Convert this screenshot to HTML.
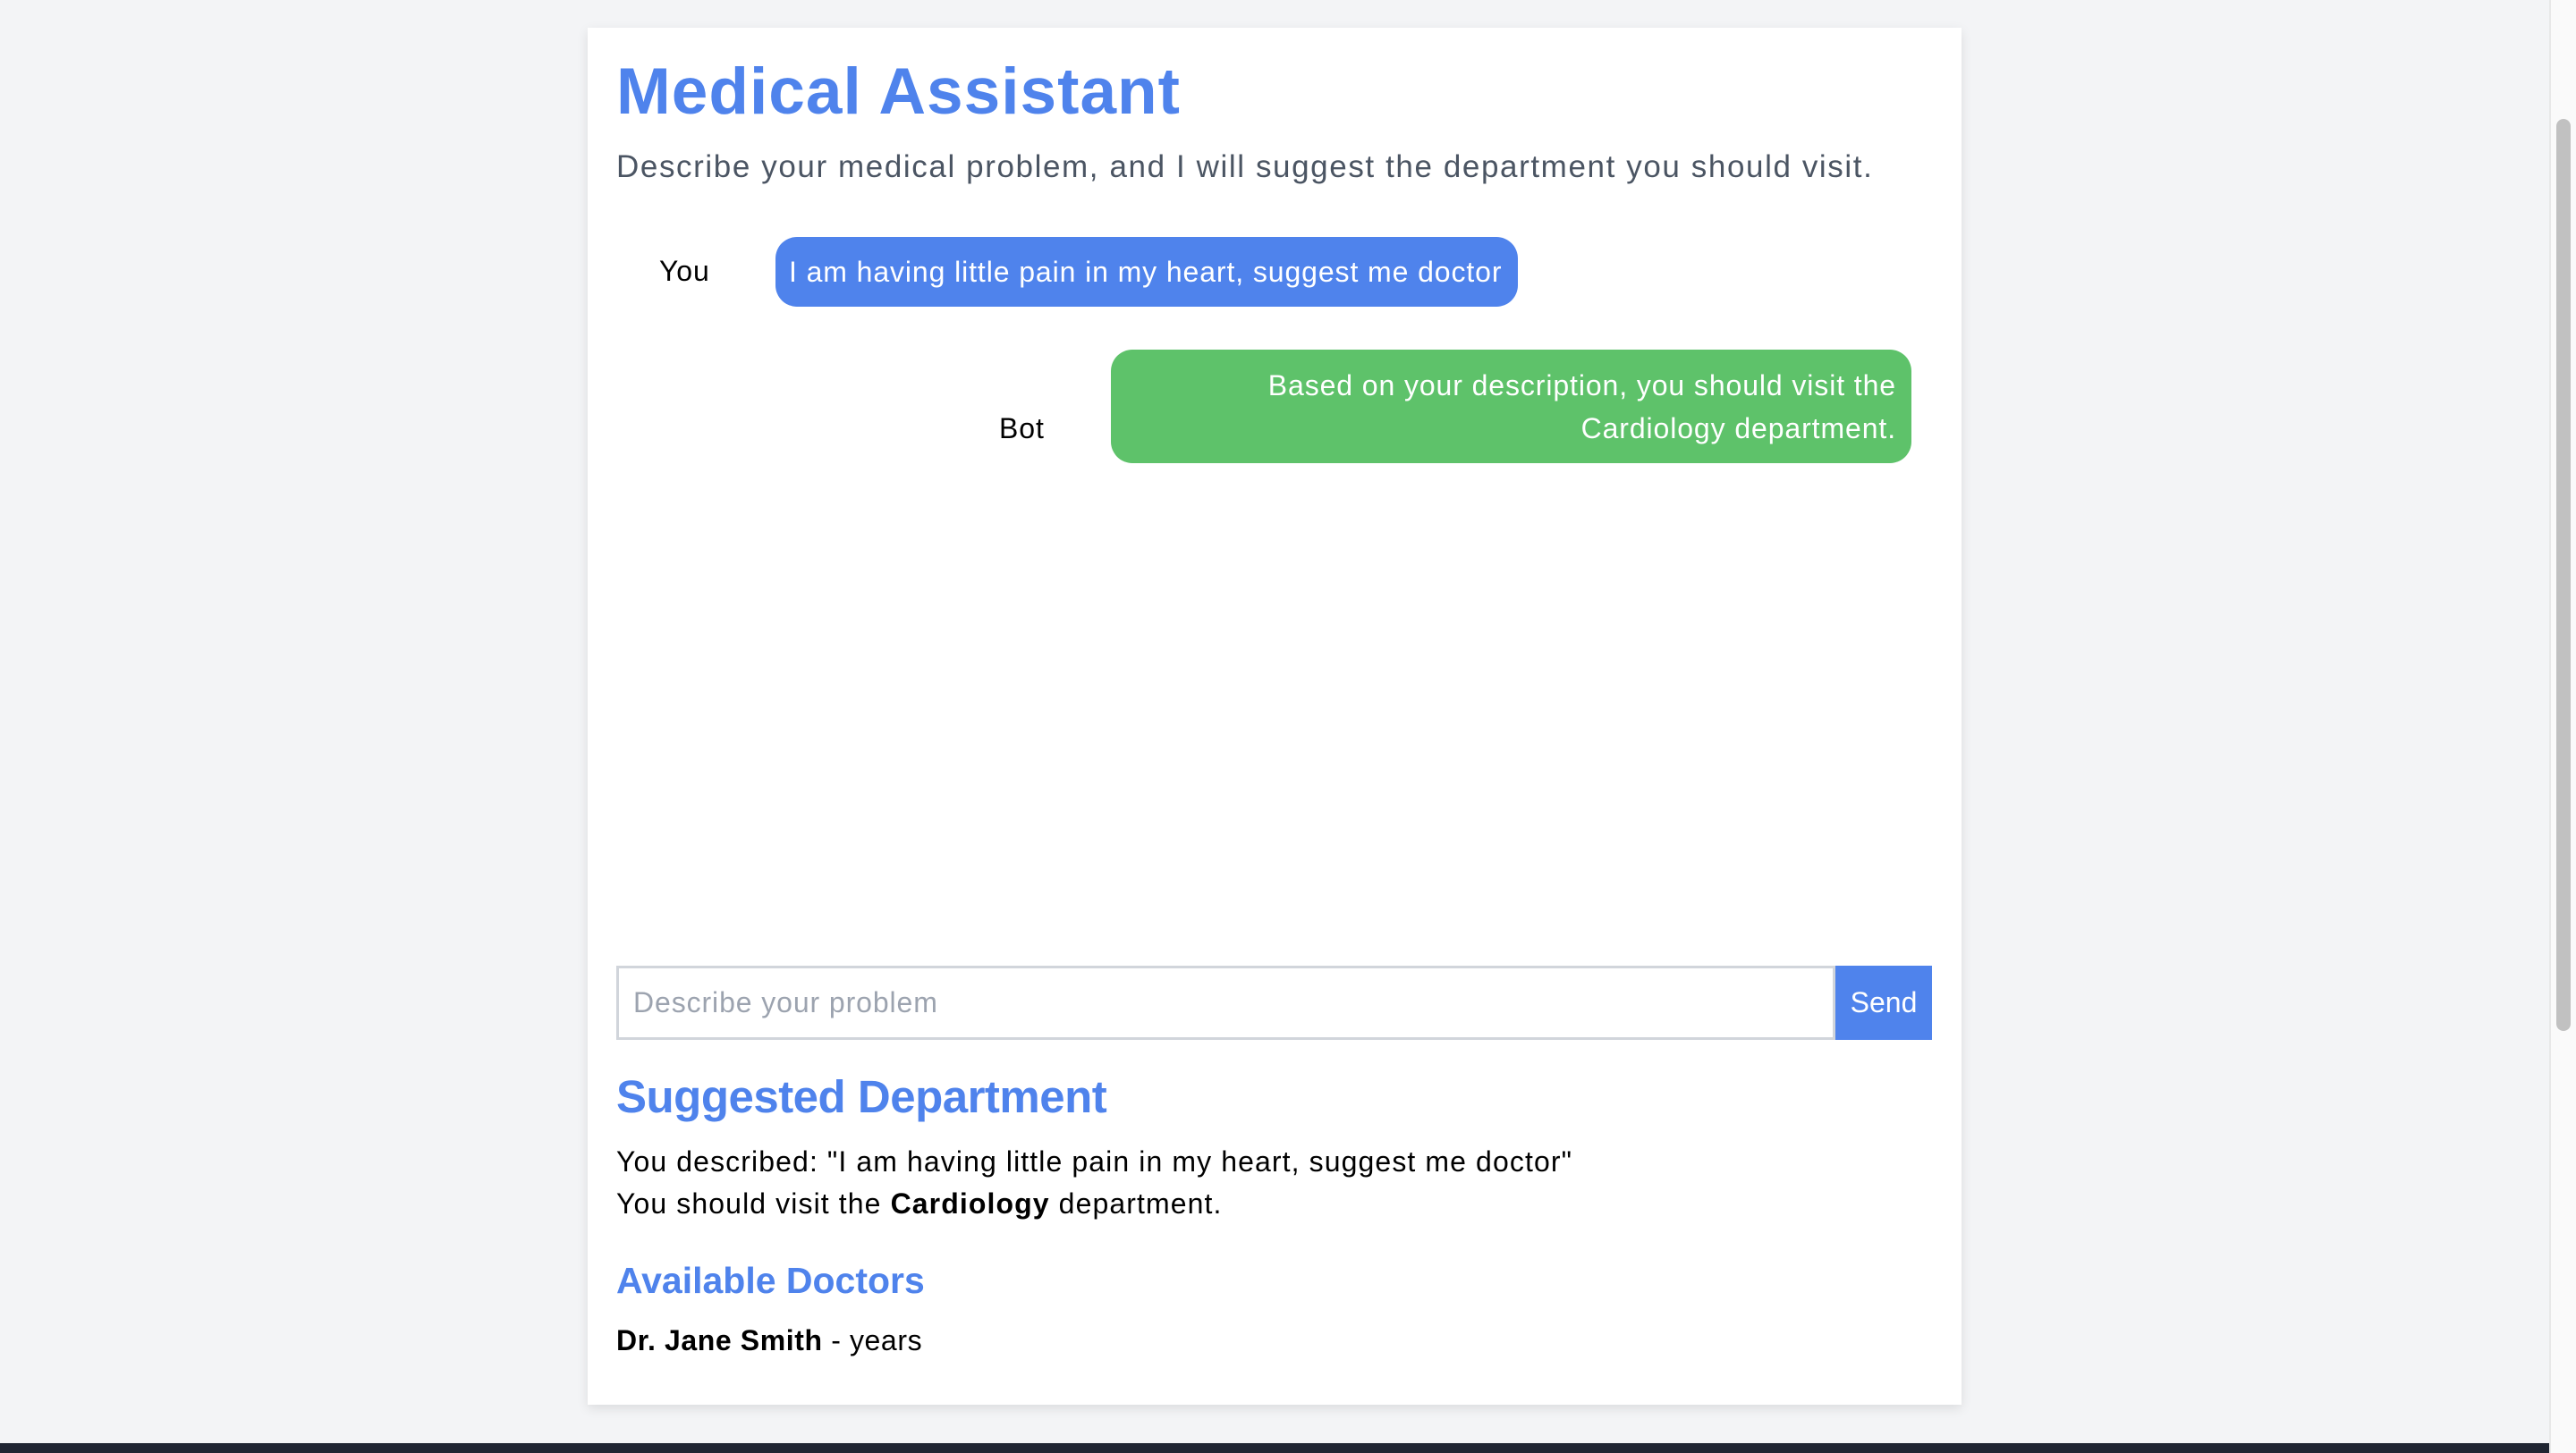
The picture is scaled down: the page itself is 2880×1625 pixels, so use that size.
<!DOCTYPE html>
<html><head><meta charset="utf-8"><style>
html,body{margin:0;padding:0;}
body{width:2880px;height:1625px;background:#f3f4f6;position:relative;overflow:hidden;font-family:"Liberation Sans",Arial,sans-serif;}
.card{position:absolute;left:657px;top:31px;width:1536px;height:1540px;background:#fff;box-shadow:0 4px 12px rgba(0,0,0,0.1);}
.a{position:absolute;white-space:nowrap;}
h1{margin:0;position:absolute;left:689px;top:58px;font-size:73px;font-weight:bold;color:#4f83ec;line-height:90px;letter-spacing:1px;}
.sub{left:689px;top:165px;font-size:35px;color:#4b5563;line-height:44px;letter-spacing:1.6px;}
.you{left:737px;top:283px;font-size:32px;line-height:40px;color:#000;letter-spacing:0.9px;}
.b1{left:867px;top:265px;width:830px;height:78px;background:#4f83ec;border-radius:24px;color:#fff;font-size:32px;line-height:78px;box-sizing:border-box;padding-left:15px;letter-spacing:0.9px;}
.bot{left:1117px;top:459px;font-size:32px;line-height:40px;color:#000;letter-spacing:0.9px;}
.b2{left:1242px;top:391px;width:895px;height:127px;background:#5ec26a;border-radius:24px;color:#fff;font-size:32px;line-height:48px;box-sizing:border-box;padding:16px 17px 0 0;text-align:right;white-space:normal;letter-spacing:0.9px;}
.inp{left:689px;top:1080px;width:1363px;height:83px;border:3px solid #d1d5db;box-sizing:border-box;color:#9ca3af;font-size:32px;line-height:77px;padding-left:16px;letter-spacing:0.9px;}
.send{left:2052px;top:1080px;width:108px;height:83px;background:#4f83ec;color:#fff;font-size:32px;line-height:83px;text-align:center;}
.h2{left:689px;top:1197px;font-size:51px;font-weight:bold;color:#4f83ec;line-height:60px;letter-spacing:-0.5px;}
.t{left:689px;font-size:32px;line-height:40px;color:#000;letter-spacing:1.1px;}
.h3{left:689px;top:1407px;font-size:41px;font-weight:bold;color:#4f83ec;line-height:50px;}
.sb{position:absolute;left:2850px;top:0;width:30px;height:1625px;background:#fafafa;border-left:2px solid #e8e8e8;box-sizing:border-box;}
.th{position:absolute;left:2858px;top:133px;width:16px;height:1020px;background:#c1c1c1;border-radius:8px;}
.bar{position:absolute;left:0;top:1614px;width:2850px;height:11px;background:#1f2532;}
</style></head><body>
<div class="card"></div>
<h1>Medical Assistant</h1>
<div class="a sub">Describe your medical problem, and I will suggest the department you should visit.</div>
<div class="a you">You</div>
<div class="a b1">I am having little pain in my heart, suggest me doctor</div>
<div class="a bot">Bot</div>
<div class="a b2">Based on your description, you should visit the<br>Cardiology department.</div>
<div class="a inp">Describe your problem</div>
<div class="a send">Send</div>
<div class="a h2">Suggested Department</div>
<div class="a t" style="top:1279px">You described: "I am having little pain in my heart, suggest me doctor"</div>
<div class="a t" style="top:1326px">You should visit the <b>Cardiology</b> department.</div>
<div class="a h3">Available Doctors</div>
<div class="a t" style="top:1479px;letter-spacing:0.6px"><b>Dr. Jane Smith</b> - years</div>
<div class="sb"></div><div class="th"></div>
<div class="bar"></div>
</body></html>
